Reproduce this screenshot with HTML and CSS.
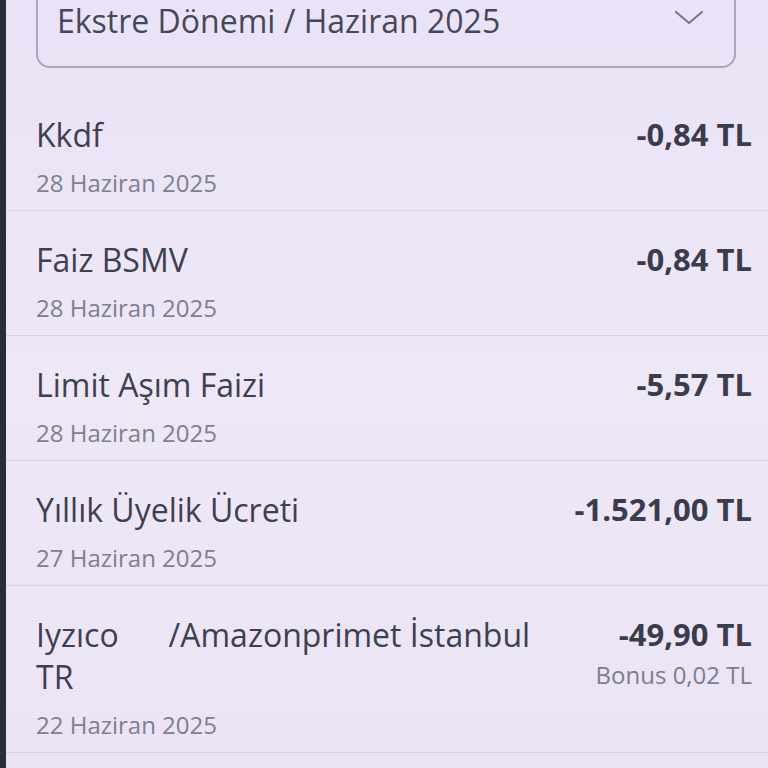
FILE: index.html
```html
<!DOCTYPE html>
<html lang="tr">
<head>
  <meta charset="UTF-8">
  <meta name="viewport" content="width=device-width, initial-scale=1.0">
  <title>Ekstre Hareketleri</title>
  <link rel="stylesheet" href="styles.css">
</head>
<body>
  <div class="screen">
    <div class="period-select">
      <span class="period-label">Ekstre Dönemi / Haziran 2025</span>
      <svg class="chevron" width="30" height="16" viewBox="0 0 30 16">
        <path d="M2 2 L15 13 L28 2" fill="none" stroke="#7a778f" stroke-width="2.2" stroke-linecap="round" stroke-linejoin="round"/>
      </svg>
    </div>

    <ul class="transactions">
      <li class="transaction">
        <div class="info">
          <div class="title">Kkdf</div>
          <div class="date">28 Haziran 2025</div>
        </div>
        <div class="money">
          <div class="amount">-0,84 TL</div>
        </div>
      </li>
      <li class="transaction">
        <div class="info">
          <div class="title">Faiz BSMV</div>
          <div class="date">28 Haziran 2025</div>
        </div>
        <div class="money">
          <div class="amount">-0,84 TL</div>
        </div>
      </li>
      <li class="transaction">
        <div class="info">
          <div class="title">Limit Aşım Faizi</div>
          <div class="date">28 Haziran 2025</div>
        </div>
        <div class="money">
          <div class="amount">-5,57 TL</div>
        </div>
      </li>
      <li class="transaction">
        <div class="info">
          <div class="title">Yıllık Üyelik Ücreti</div>
          <div class="date">27 Haziran 2025</div>
        </div>
        <div class="money">
          <div class="amount">-1.521,00 TL</div>
        </div>
      </li>
      <li class="transaction">
        <div class="info">
          <div class="title">Iyzıco      /Amazonprimet İstanbul TR</div>
          <div class="date">22 Haziran 2025</div>
        </div>
        <div class="money">
          <div class="amount">-49,90 TL</div>
          <div class="bonus">Bonus 0,02 TL</div>
        </div>
      </li>
    </ul>
  </div>
</body>
</html>
```

FILE: styles.css
```css
/* Ekstre listesi */
body, html {
  margin: 0;
  padding: 0;
  height: 100%;
  overflow: hidden;
}

body {
  font-family: "Open Sans", "Noto Sans", sans-serif;
  background-color: #ece6f6;
  color: #3d3f51;
}

.screen {
  display: flow-root;
  height: 100%;
  border-left: 6px solid #2a2c39;
  background: linear-gradient(180deg, #eae3f7 0%, #ede7f6 50%, #ece4f5 100%);
}

.period-select {
  display: flex;
  justify-content: space-between;
  align-items: flex-start;
  margin: -24px 32px 0 30px;
  padding: 23px 30px 25px 19px;
  border: 2px solid #aaa6bb;
  border-radius: 14px;
}

.period-label {
  font-size: 32px;
  line-height: 40px;
  color: #45475a;
}

.chevron {
  margin-top: 9px;
}

.transactions {
  list-style-type: none;
  margin: 18px 0 0;
  padding: 0;
}

.transaction {
  display: flex;
  justify-content: space-between;
  padding: 28px 16px 11px 30px;
  border-bottom: 1px solid #d8d2e3;
}

.info {
  max-width: 520px;
}

.title {
  font-size: 32px;
  line-height: 42px;
  white-space: pre-wrap;
  color: #3e4052;
}

.date {
  margin-top: 11px;
  font-size: 24px;
  line-height: 32px;
  color: #7f7f8f;
}

.money {
  text-align: right;
}

.amount {
  font-size: 31px;
  line-height: 40px;
  font-weight: 700;
  color: #3a3c4d;
}

.bonus {
  font-size: 24px;
  line-height: 42px;
  color: #7c7d90;
}
```
